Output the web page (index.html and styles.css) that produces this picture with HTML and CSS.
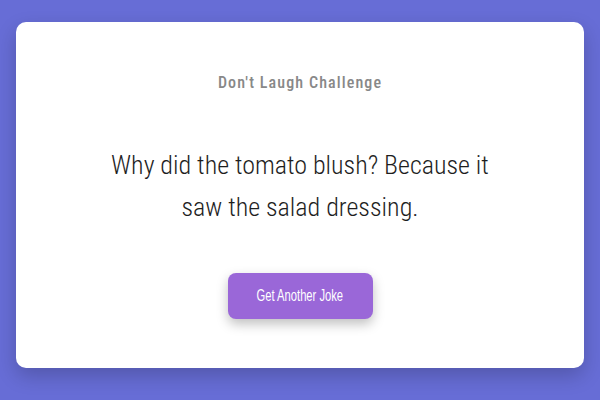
FILE: index.html
```html
<!DOCTYPE html>
<html>
<head>
<meta charset="utf-8">
<link rel="stylesheet" href="styles.css">
</head>
<body>
<div class="card">
  <h1 class="title">Don't Laugh Challenge</h1>
  <p class="joke">Why did the tomato blush? Because it saw the salad dressing.</p>
  <button class="btn"><span class="btn-label">Get Another Joke</span></button>
</div>
</body>
</html>
```
FILE: styles.css
```css
html, body {
  margin: 0;
  height: 100%;
}
body {
  background: #676dd6;
  padding: 22px 16px 32px;
  box-sizing: border-box;
  font-family: Roboto, "Liberation Sans", sans-serif;
}
.card {
  background: #fff;
  border-radius: 10px;
  height: 346px;
  box-shadow: 0 8px 20px rgba(0,0,0,0.2);
  display: flex;
  flex-direction: column;
  align-items: center;
  padding-top: 50px;
  box-sizing: border-box;
}
.title {
  margin: 0;
  font-size: 16px;
  font-weight: 500;
  font-stretch: 75%;
  letter-spacing: 1.1px;
  color: #888;
  line-height: 22px;
}
.joke {
  margin: 50px 0 0;
  width: 400px;
  text-align: center;
  font-size: 26px;
  font-weight: 300;
  font-stretch: 75%;
  letter-spacing: 0;
  color: #1e1e1e;
  line-height: 42px;
}
.btn {
  margin-top: 45px;
  width: 145px;
  height: 46px;
  border: none;
  border-radius: 8px;
  background: #9a67d8;
  color: #fff;
  font-family: "Liberation Sans", Arial, sans-serif;
  font-size: 16px;
  box-shadow: 0 5px 12px rgba(0,0,0,0.25);
  display: flex;
  align-items: center;
  justify-content: center;
  padding: 0;
}
.btn-label {
  display: inline-block;
  white-space: nowrap;
  transform: scaleX(0.7);
}
```
